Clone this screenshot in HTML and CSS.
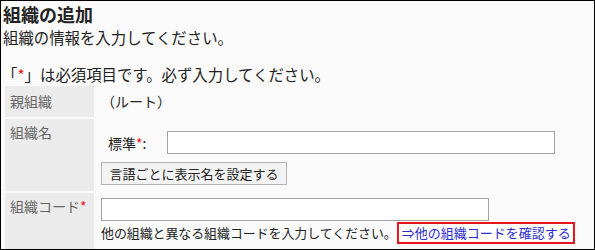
FILE: index.html
```html
<!DOCTYPE html>
<html lang="ja">
<head>
<meta charset="utf-8">
<link rel="stylesheet" href="styles.css">
</head>
<body>
<div class="page">
  <h1 class="title">組織の追加</h1>
  <p class="intro">組織の情報を入力してください。</p>
  <p class="required">「<span class="star">*</span>」は必須項目です。必ず入力してください。</p>
  <div class="form">
    <div class="label row1">親組織</div>
    <div class="value row1 root">（ルート）</div>

    <div class="label row2">組織名</div>
    <div class="value row2">
      <div class="name-line">
        <span class="name-label">標準<span class="star">*</span>:</span>
        <span class="input wide"></span>
      </div>
      <span class="button">言語ごとに表示名を設定する</span>
    </div>

    <div class="label row3">組織コード<span class="star">*</span></div>
    <div class="value row3">
      <span class="input code"></span>
      <div class="help">他の組織と異なる組織コードを入力してください。<a class="check-link" href="#">⇒他の組織コードを確認する</a></div>
    </div>
  </div>
</div>
</body>
</html>
```

FILE: styles.css
```css
html, body {
  margin: 0;
  padding: 0;
}
body {
  font-family: "Noto Sans CJK JP", "Noto Sans", sans-serif;
  color: #222;
}
.page {
  box-sizing: border-box;
  width: 595px;
  height: 250px;
  border: 1px solid #000;
  background: #fafafa;
  padding: 1px 4px 0 4px;
  overflow: hidden;
}
.title {
  margin: 0;
  font-size: 18px;
  font-weight: bold;
  line-height: 24px;
  color: #222;
  margin-left: -2px;
}
.intro {
  margin: 0;
  font-size: 15.4px;
  line-height: 20px;
  margin-left: -2px;
  margin-top: 1px;
}
.required {
  margin: 0;
  font-size: 15.4px;
  line-height: 20px;
  margin-top: 17px;
  margin-left: -3px;
}
.star {
  color: #e8141b;
}
.form {
  display: grid;
  grid-template-columns: 89px 1fr;
  grid-template-rows: 31px 72px 56px;
  gap: 2px;
  margin-top: 2px;
}
.label {
  background: #ebebeb;
  color: #666;
  font-size: 14px;
  line-height: 20px;
  padding: 5px 5px;
}
.label.row2 {
  padding-top: 3px;
}
.label.row3 {
  padding-top: 3px;
}
.value {
  padding: 5px;
  font-size: 14px;
  line-height: 20px;
  min-width: 0;
}
.name-line {
  display: flex;
  align-items: center;
  padding-left: 7px;
  margin-top: 7px;
}
.name-label {
  width: 59px;
  flex: none;
}
.input {
  display: block;
  box-sizing: border-box;
  height: 23px;
  border: 1px solid #a3a3a3;
  background: #fff;
}
.input.wide {
  width: 388px;
}
.input.code {
  width: 388px;
}
.button {
  display: flex;
  align-items: center;
  justify-content: center;
  box-sizing: border-box;
  width: 186px;
  height: 23px;
  margin-top: 8px;
  border: 1px solid #b3b3b3;
  background: #f3f3f3;
  font-size: 13px;
  color: #222;
}
.help {
  display: flex;
  align-items: center;
  white-space: nowrap;
  margin-top: 1px;
  font-size: 12.9px;
  line-height: 18px;
}
.check-link {
  display: inline-block;
  box-sizing: border-box;
  height: 22px;
  line-height: 18px;
  margin-left: 0;
  padding: 0 2px 0 3px;
  border: 2px solid #e8141b;
  background: #fff;
  color: #2b2bd0;
  font-size: 13px;
  text-decoration: none;
}
```
